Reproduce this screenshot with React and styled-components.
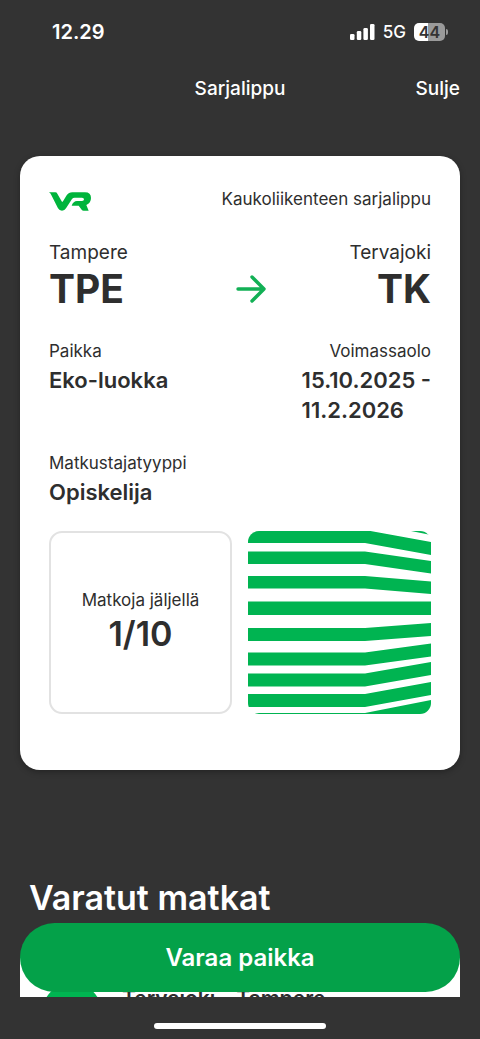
import React from 'react';
import styled, { createGlobalStyle } from 'styled-components';

const Global = createGlobalStyle`
  * { box-sizing: border-box; }
  body {
    margin: 0;
    background: #333333;
    font-family: Inter, "Liberation Sans", sans-serif;
    color: #2e2e2e;
    font-kerning: normal;
  }
  h1, h2, p, dl, dt, dd { margin: 0; }
`;

const Screen = styled.div`
  display: flex;
  flex-direction: column;
  height: 100vh;
  overflow: hidden;
  background: #333333;
`;

const StatusBar = styled.div`
  display: flex;
  flex: none;
  align-items: center;
  justify-content: space-between;
  height: 64px;
  padding: 0 32px 0 52px;
  color: #ffffff;
`;

const Clock = styled.time`
  font-size: 20px;
  font-weight: 600;
`;

const StatusIcons = styled.div`
  display: flex;
  align-items: center;
  gap: 8px;
  font-size: 17px;
  font-weight: 500;
`;

const Battery = styled.span`
  display: flex;
  align-items: center;
  gap: 1px;
`;

const BatteryBody = styled.span`
  width: 31px;
  height: 18px;
  border-radius: 5px;
  background: linear-gradient(to right, #ffffff 44%, #9a9a9a 44%);
  color: #333333;
  font-size: 16px;
  font-weight: 600;
  line-height: 18px;
  text-align: center;
`;

const BatteryCap = styled.span`
  width: 2px;
  height: 6px;
  border-radius: 0 2px 2px 0;
  background: #9a9a9a;
`;

const NavBar = styled.header`
  display: grid;
  flex: none;
  grid-template-columns: 1fr auto 1fr;
  align-items: center;
  height: 48px;
  padding: 0 20px;
  color: #ffffff;
`;

const NavTitle = styled.h1`
  grid-column: 2;
  font-size: 19px;
  font-weight: 500;
`;

const CloseButton = styled.button`
  justify-self: end;
  padding: 0;
  border: 0;
  background: none;
  color: inherit;
  font: inherit;
  font-size: 19px;
  font-weight: 500;
`;

const Content = styled.main`
  flex: 1;
  min-height: 0;
  overflow: hidden;
  padding: 44px 20px 0;
`;

const Ticket = styled.article`
  padding: 31px 29px 56px;
  border-radius: 20px;
  background: #ffffff;
  box-shadow: 0 2px 6px rgba(0, 0, 0, 0.3);
`;

const Row = styled.div`
  display: flex;
  align-items: ${(p) => p.$align || 'center'};
  justify-content: space-between;
  margin-bottom: ${(p) => p.$gap || 0}px;
`;

const TicketHeader = styled(Row)`
  svg { margin-top: 4px; }
`;

const Label = styled.p`
  font-size: 17px;
  line-height: 24px;
`;

const Station = styled.div`
  flex: 1;
  text-align: ${(p) => p.$align || 'left'};
`;

const StationName = styled.p`
  font-size: 19px;
  line-height: 28px;
`;

const StationCode = styled.p`
  font-size: 39px;
  font-weight: 700;
  line-height: 44px;
`;

const ArrowSlot = styled.div`
  display: flex;
  align-self: flex-end;
  align-items: center;
  height: 44px;
  padding-left: 22px;
`;

const Fact = styled.dl`
  display: flex;
  flex-direction: column;
  align-items: ${(p) => p.$align || 'flex-start'};
`;

const FactName = styled.dt`
  font-size: 17px;
  line-height: 28px;
`;

const FactValue = styled.dd`
  font-size: 22px;
  font-weight: 600;
  line-height: 30px;
`;

const Tiles = styled.div`
  display: grid;
  grid-template-columns: 1fr 1fr;
  gap: 16px;
`;

const CounterTile = styled.div`
  display: flex;
  flex-direction: column;
  align-items: center;
  justify-content: center;
  aspect-ratio: 1;
  padding-bottom: 2px;
  border: 2px solid #e2e2e2;
  border-radius: 13px;
`;

const Count = styled.p`
  font-size: 34px;
  font-weight: 600;
  line-height: 44px;
`;

const PatternTile = styled.svg`
  display: block;
  width: 100%;
  height: 100%;
  border-radius: 11px;
`;

const Trips = styled.section`
  padding-top: 104px;
`;

const TripsTitle = styled.h2`
  padding: 0 9px;
  color: #ffffff;
  font-size: 34px;
  font-weight: 600;
  line-height: 48px;
`;

const Trip = styled.article`
  display: flex;
  align-items: flex-start;
  gap: 20px;
  margin-top: 36px;
  padding: 25px 22px 24px;
  background: #ffffff;
`;

const TripBadge = styled.span`
  width: 60px;
  height: 60px;
  border-radius: 50%;
  background: #00b451;
`;

const TripName = styled.p`
  padding-top: 4px;
  font-size: 21px;
  font-weight: 600;
  line-height: 24px;
`;

const Footer = styled.footer`
  position: relative;
  display: flex;
  flex: none;
  align-items: center;
  justify-content: center;
  height: 42px;
  padding-top: 16px;
  background: #333333;
`;

const ReserveButton = styled.button`
  position: absolute;
  right: 20px;
  bottom: 47px;
  left: 20px;
  height: 69px;
  border: 0;
  border-radius: 35px;
  background: #04a149;
  color: #ffffff;
  font: inherit;
  font-size: 24px;
  font-weight: 600;
`;

const HomeIndicator = styled.span`
  width: 172px;
  height: 6px;
  border-radius: 3px;
  background: #ffffff;
`;

const Signal = () => (
  <svg width="25" height="16" viewBox="0 0 25 16" fill="#ffffff" aria-hidden="true">
    <rect x="0" y="10" width="4.5" height="6" rx="1.3" />
    <rect x="6.8" y="7" width="4.5" height="9" rx="1.3" />
    <rect x="13.4" y="4" width="4.5" height="12" rx="1.3" />
    <rect x="20" y="0" width="4.5" height="16" rx="1.3" />
  </svg>
);

const Logo = () => (
  <svg width="42" height="19" viewBox="0 0 126 57" fill="#00b43c" role="img" aria-label="VR">
    <path d="M0 1H19Q23 1 25 5L38 28Q40 31 42 28L53 10Q59 1 70 1H108Q126 1 126 18Q126 33 112 39L119 56H104Q100 56 98 53L89 41H68Q73 27 84 27H99Q105 27 105 22Q105 17 99 17H77Q72 17 69 21L51 49Q47 56 39 56Q31 56 27 49L8 11Q5 4 0 1Z" />
  </svg>
);

const Arrow = () => (
  <svg width="30" height="30" viewBox="0 0 30 30" fill="none" stroke="#12b055" strokeWidth="3.4" strokeLinecap="round" strokeLinejoin="round" aria-hidden="true">
    <path d="M2 15H27M16 3L28 15L16 27" />
  </svg>
);

/* Each stripe runs level to x=117 and then bends: [left top, right top, thickness]. */
const stripes = [
  [-1, 11, 13], [20.5, 30, 12.5], [45, 50.5, 12.5], [70.5, 70.5, 13.5],
  [97, 92, 13], [121.5, 112.5, 13], [142.5, 131, 13], [163, 151, 13], [182, 169, 14],
];

const Pattern = () => (
  <PatternTile viewBox="0 0 183 183" aria-hidden="true">
    {stripes.map(([l, r, t]) => (
      <path key={l} fill="#00b451" d={`M0 ${l}H117L183 ${r}V${r + t}L117 ${l + t}H0Z`} />
    ))}
    <path fill="#00b451" d="M163 0H183V4Z" />
  </PatternTile>
);

export default function App() {
  return (
    <>
      <Global />
      <Screen>
        <StatusBar>
          <Clock>12.29</Clock>
          <StatusIcons>
            <Signal />
            <span>5G</span>
            <Battery>
              <BatteryBody>44</BatteryBody>
              <BatteryCap />
            </Battery>
          </StatusIcons>
        </StatusBar>
        <NavBar>
          <NavTitle>Sarjalippu</NavTitle>
          <CloseButton type="button">Sulje</CloseButton>
        </NavBar>
        <Content>
          <Ticket>
            <TicketHeader $gap={28}>
              <Logo />
              <Label>Kaukoliikenteen sarjalippu</Label>
            </TicketHeader>
            <Row $gap={26}>
              <Station>
                <StationName>Tampere</StationName>
                <StationCode>TPE</StationCode>
              </Station>
              <ArrowSlot>
                <Arrow />
              </ArrowSlot>
              <Station $align="right">
                <StationName>Tervajoki</StationName>
                <StationCode>TK</StationCode>
              </Station>
            </Row>
            <Row $align="flex-start" $gap={24}>
              <Fact>
                <FactName>Paikka</FactName>
                <FactValue>Eko-luokka</FactValue>
              </Fact>
              <Fact $align="flex-end">
                <FactName>Voimassaolo</FactName>
                <FactValue>15.10.2025 -<br />11.2.2026</FactValue>
              </Fact>
            </Row>
            <Row $gap={24}>
              <Fact>
                <FactName>Matkustajatyyppi</FactName>
                <FactValue>Opiskelija</FactValue>
              </Fact>
            </Row>
            <Tiles>
              <CounterTile>
                <Label>Matkoja jäljellä</Label>
                <Count>1/10</Count>
              </CounterTile>
              <Pattern />
            </Tiles>
          </Ticket>
          <Trips>
            <TripsTitle>Varatut matkat</TripsTitle>
            <Trip>
              <TripBadge />
              <TripName>Tervajoki – Tampere</TripName>
            </Trip>
          </Trips>
        </Content>
        <Footer>
          <ReserveButton type="button">Varaa paikka</ReserveButton>
          <HomeIndicator />
        </Footer>
      </Screen>
    </>
  );
}
